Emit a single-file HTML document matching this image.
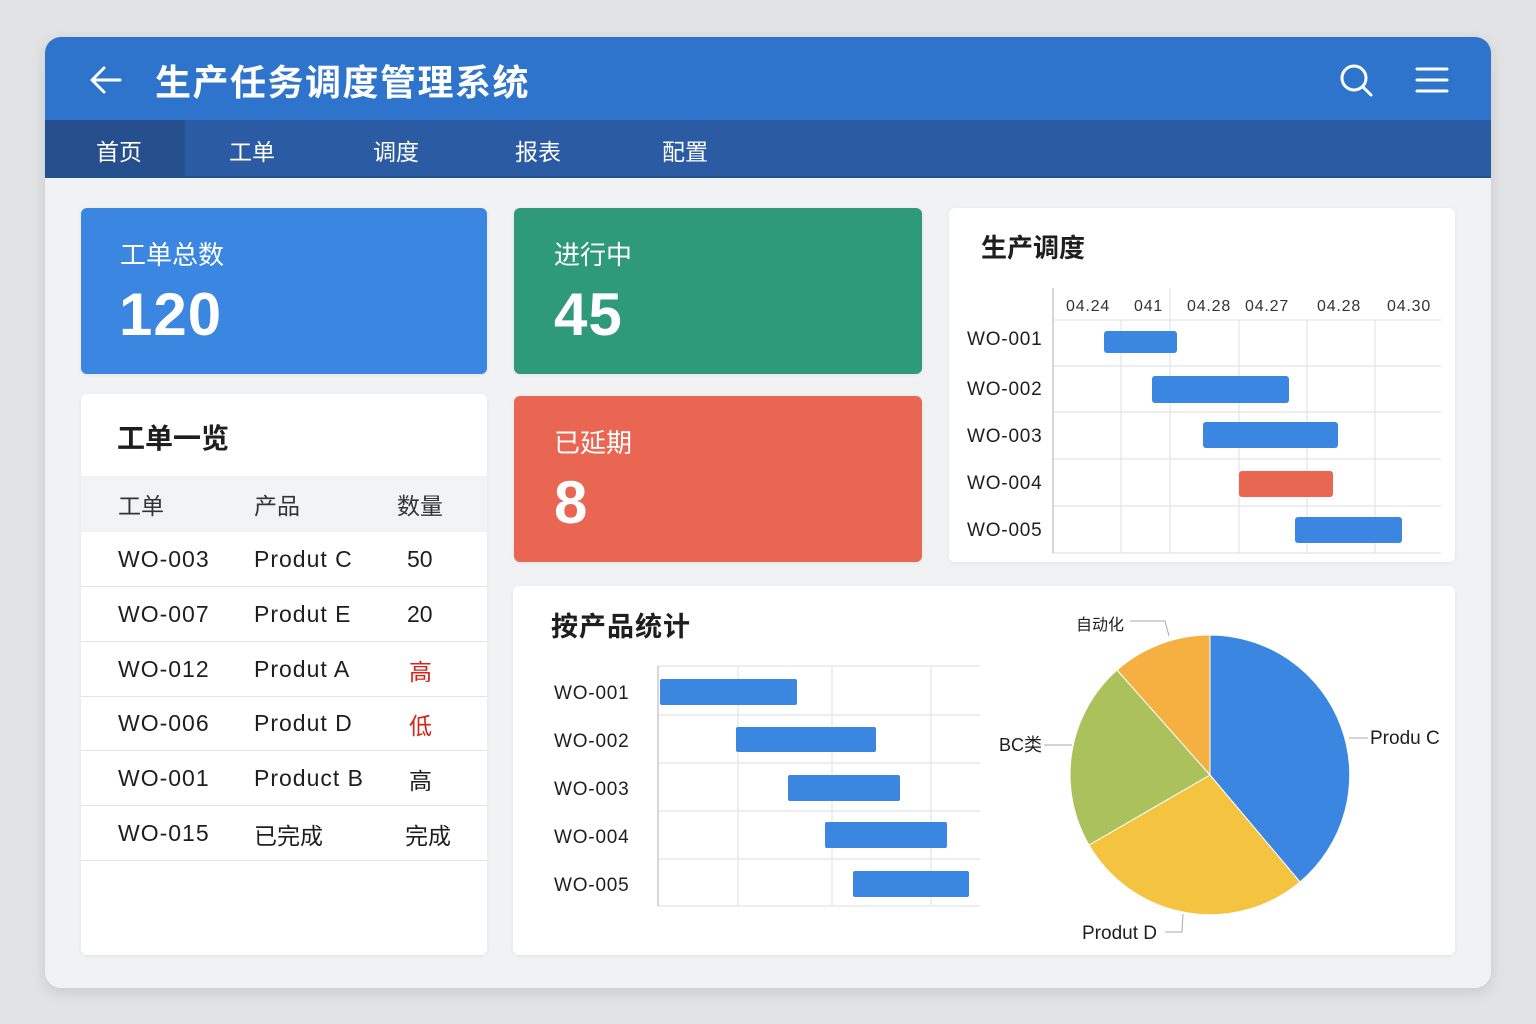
<!DOCTYPE html>
<html><head><meta charset="utf-8"><style>
*{margin:0;padding:0;box-sizing:border-box}
body{width:1536px;height:1024px;background:#e2e3e5;position:relative;overflow:hidden;font-family:"Liberation Sans","Noto Sans CJK SC",sans-serif;color:#1e1e1e}
.a{position:absolute}
.frame{left:45px;top:37px;width:1446px;height:951px;border-radius:16px;background:#f0f2f4;overflow:hidden;box-shadow:0 4px 14px rgba(0,0,0,.12)}
.card{position:absolute;border-radius:6px;background:#fff;box-shadow:0 1px 4px rgba(0,0,0,.06)}
.t{position:absolute;white-space:nowrap}
.w{letter-spacing:1px}
.row{position:absolute;left:0;width:406px;height:1px;background:#e2e4e7}
</style></head><body>
<div class="a frame">
 <div class="a" style="left:0;top:0;width:1446px;height:83px;background:#2f74cc"></div>
 <div class="a" style="left:0;top:83px;width:1446px;height:58px;background:#2a5ba3;border-bottom:2px solid #244f8c"></div>
 <div class="a" style="left:0;top:83px;width:140px;height:58px;background:#264f8e"></div>
</div>
<svg class="a" style="left:88px;top:64px" width="36" height="32" viewBox="0 0 36 32"><path d="M32 16H4M16 4L4 16l12 12" fill="none" stroke="#fff" stroke-width="3" stroke-linecap="round" stroke-linejoin="round"/></svg>
<div class="t" style="left:155px;top:54px;font-size:36px;font-weight:bold;color:#fff;letter-spacing:1.5px">生产任务调度管理系统</div>
<svg class="a" style="left:1338px;top:62px" width="36" height="36" viewBox="0 0 36 36"><circle cx="16" cy="16" r="12" fill="none" stroke="#fff" stroke-width="3"/><path d="M25 25l8 8" stroke="#fff" stroke-width="3" stroke-linecap="round"/></svg>
<svg class="a" style="left:1415px;top:66px" width="36" height="30" viewBox="0 0 36 30"><path d="M2 3h30M2 14h30M2 25h30" stroke="#fff" stroke-width="3" stroke-linecap="round"/></svg>
<div class="t" style="left:96px;top:133px;font-size:23px;color:#fff">首页</div>
<div class="t" style="left:229px;top:133px;font-size:23px;color:#fff">工单</div>
<div class="t" style="left:373px;top:133px;font-size:23px;color:#fff">调度</div>
<div class="t" style="left:515px;top:133px;font-size:23px;color:#fff">报表</div>
<div class="t" style="left:662px;top:133px;font-size:23px;color:#fff">配置</div>

<div class="card" style="left:81px;top:208px;width:406px;height:166px;background:#3a86e0"></div>
<div class="t" style="left:120px;top:235px;font-size:26px;color:#fff">工单总数</div>
<div class="t" style="left:119px;top:280px;font-size:60px;font-weight:bold;color:#fff;letter-spacing:1px">120</div>
<div class="card" style="left:514px;top:208px;width:408px;height:166px;background:#2e9a78"></div>
<div class="t" style="left:554px;top:235px;font-size:26px;color:#fff">进行中</div>
<div class="t" style="left:554px;top:280px;font-size:60px;font-weight:bold;color:#fff;letter-spacing:1px">45</div>
<div class="card" style="left:514px;top:396px;width:408px;height:166px;background:#e96752"></div>
<div class="t" style="left:554px;top:423px;font-size:26px;color:#fff">已延期</div>
<div class="t" style="left:554px;top:468px;font-size:60px;font-weight:bold;color:#fff">8</div>

<div class="card" style="left:81px;top:394px;width:406px;height:561px">
 <div class="t" style="left:36px;top:23px;font-size:28px;font-weight:bold">工单一览</div>
 <div class="a" style="left:0;top:82px;width:406px;height:56px;background:#f2f3f5"></div>
 <div class="t" style="left:37px;top:93px;font-size:23px;color:#333">工单</div>
 <div class="t" style="left:173px;top:93px;font-size:23px;color:#333">产品</div>
 <div class="t" style="left:316px;top:93px;font-size:23px;color:#333">数量</div>
 <div class="row" style="top:192px"></div><div class="row" style="top:247px"></div><div class="row" style="top:302px"></div><div class="row" style="top:356px"></div><div class="row" style="top:411px"></div><div class="row" style="top:466px"></div>
 <div class="t w" style="left:37px;top:152px;font-size:23px">WO-003</div><div class="t w" style="left:173px;top:152px;font-size:23px">Produt C</div><div class="t" style="left:326px;top:152px;font-size:23px">50</div>
 <div class="t w" style="left:37px;top:207px;font-size:23px">WO-007</div><div class="t w" style="left:173px;top:207px;font-size:23px">Produt E</div><div class="t" style="left:326px;top:207px;font-size:23px">20</div>
 <div class="t w" style="left:37px;top:262px;font-size:23px">WO-012</div><div class="t w" style="left:173px;top:262px;font-size:23px">Produt A</div><div class="t" style="left:328px;top:259px;font-size:23px;color:#d9211a">高</div>
 <div class="t w" style="left:37px;top:316px;font-size:23px">WO-006</div><div class="t w" style="left:173px;top:316px;font-size:23px">Produt D</div><div class="t" style="left:328px;top:313px;font-size:23px;color:#d9211a">低</div>
 <div class="t w" style="left:37px;top:371px;font-size:23px">WO-001</div><div class="t w" style="left:173px;top:371px;font-size:23px">Product B</div><div class="t" style="left:328px;top:368px;font-size:23px">高</div>
 <div class="t w" style="left:37px;top:426px;font-size:23px">WO-015</div><div class="t" style="left:173px;top:423px;font-size:23px">已完成</div><div class="t" style="left:324px;top:423px;font-size:23px">完成</div>
</div>

<div class="card" style="left:949px;top:208px;width:506px;height:354px"></div>
<div class="t" style="left:981px;top:228px;font-size:26px;font-weight:bold">生产调度</div>
<svg class="a" style="left:949px;top:208px" width="506" height="354">
 <g stroke="#e2e4e7" stroke-width="1.2">
  <path d="M104 112H492M104 158H492M104 204H492M104 251H492M104 298H492M104 345H492"/>
  <path d="M172 112V345M221 80V345M290 112V345M358 112V345M426 112V345"/>
 </g>
 <path d="M104 80V345" stroke="#c8cacd" stroke-width="1.5"/>
 <g font-size="16" fill="#333" font-family="Liberation Sans,sans-serif" letter-spacing="0.8">
  <text x="117" y="103">04.24</text><text x="185" y="103">041</text><text x="238" y="103">04.28</text><text x="296" y="103">04.27</text><text x="368" y="103">04.28</text><text x="438" y="103">04.30</text>
 </g>
 <g font-size="19" fill="#1e1e1e" font-family="Liberation Sans,sans-serif" letter-spacing="0.8">
  <text x="18" y="137">WO-001</text><text x="18" y="187">WO-002</text><text x="18" y="234">WO-003</text><text x="18" y="281">WO-004</text><text x="18" y="328">WO-005</text>
 </g>
 <rect x="155" y="123" width="73" height="22" rx="3" fill="#3a86e0"/>
 <rect x="203" y="168" width="137" height="27" rx="3" fill="#3a86e0"/>
 <rect x="254" y="214" width="135" height="26" rx="3" fill="#3a86e0"/>
 <rect x="290" y="263" width="94" height="26" rx="3" fill="#e96752"/>
 <rect x="346" y="309" width="107" height="26" rx="3" fill="#3a86e0"/>
</svg>

<div class="card" style="left:513px;top:586px;width:942px;height:369px"></div>
<div class="t" style="left:551px;top:605px;font-size:27px;font-weight:bold;letter-spacing:1px">按产品统计</div>
<svg class="a" style="left:513px;top:586px" width="942" height="369">
 <g stroke="#e2e4e7" stroke-width="1.2">
  <path d="M145 80H467M145 129H467M145 177H467M145 225H467M145 273H467M145 320H467"/>
  <path d="M225 80V320M319 80V320M418 80V320"/>
 </g>
 <path d="M145 80V320" stroke="#c8cacd" stroke-width="1.5"/>
 <g font-size="19" fill="#1e1e1e" font-family="Liberation Sans,sans-serif" letter-spacing="0.8">
  <text x="41" y="113">WO-001</text><text x="41" y="161">WO-002</text><text x="41" y="209">WO-003</text><text x="41" y="257">WO-004</text><text x="41" y="305">WO-005</text>
 </g>
 <rect x="147" y="93" width="137" height="26" rx="2" fill="#3a86e0"/>
 <rect x="223" y="141" width="140" height="25" rx="2" fill="#3a86e0"/>
 <rect x="275" y="189" width="112" height="26" rx="2" fill="#3a86e0"/>
 <rect x="312" y="236" width="122" height="26" rx="2" fill="#3a86e0"/>
 <rect x="340" y="285" width="116" height="26" rx="2" fill="#3a86e0"/>
</svg>
<svg class="a" style="left:0;top:0" width="1536" height="1024" pointer-events="none">
 <path d="M1210 775L1210 635A140 140 0 0 1 1300 882Z" fill="#3a86e0" stroke="#fff" stroke-width="1"/>
 <path d="M1210 775L1300 882A140 140 0 0 1 1089 845Z" fill="#f4c440" stroke="#fff" stroke-width="1"/>
 <path d="M1210 775L1089 845A140 140 0 0 1 1117 670Z" fill="#abc25c" stroke="#fff" stroke-width="1"/>
 <path d="M1210 775L1117 670A140 140 0 0 1 1210 635Z" fill="#f5b041" stroke="#fff" stroke-width="1"/>
 <g stroke="#aaa" stroke-width="1" fill="none">
  <path d="M1130 621H1165L1169 636"/><path d="M1044 745H1072"/><path d="M1349 738H1368"/><path d="M1165 932H1182L1183 914"/>
 </g>
 <g font-family="Liberation Sans,'Noto Sans CJK SC',sans-serif" fill="#1e1e1e">
  <text x="1076" y="630" font-size="16">自动化</text>
  <text x="999" y="751" font-size="18">BC类</text>
  <text x="1370" y="744" font-size="19">Produ C</text>
  <text x="1082" y="939" font-size="19">Produt D</text>
 </g>
</svg>
</body></html>
